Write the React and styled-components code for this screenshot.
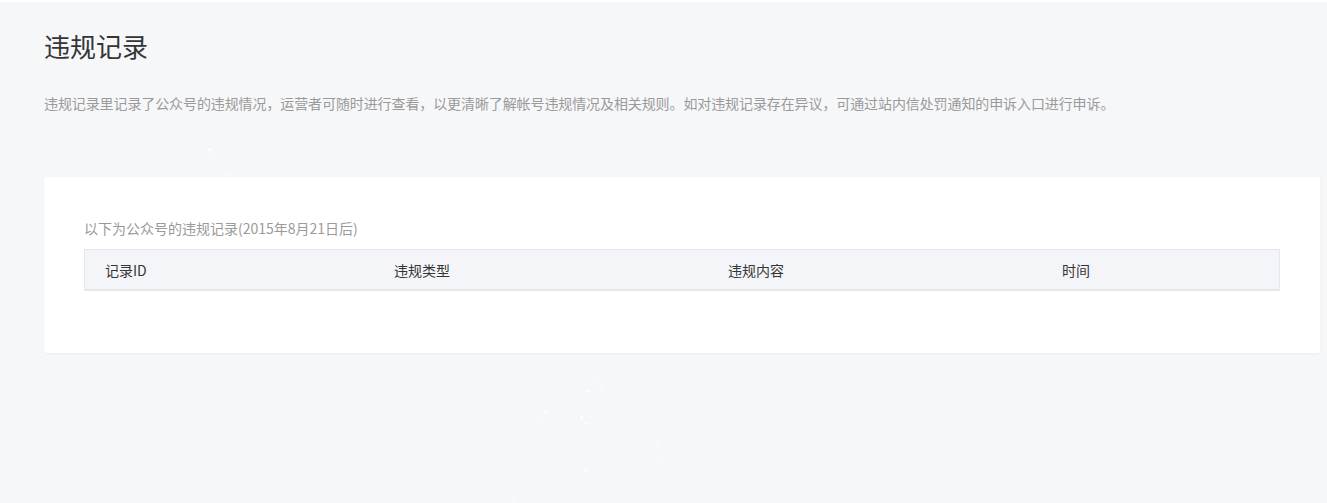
import React from "react";
import styled, { createGlobalStyle } from "styled-components";

const Global = createGlobalStyle`
  html, body { margin: 0; padding: 0; background: #f6f7f9; }
  body {
    font-family: "Noto Sans CJK SC", "Noto Sans", sans-serif;
    color: #353535;
  }
`;

const Page = styled.div`
  position: relative;
  min-height: 503px;
  box-sizing: border-box;
  border-top: 2px solid #ffffff;
  background: #f6f7f9;
  padding: 24px 7px 0 44px;
  overflow: hidden;
`;

const Title = styled.h1`
  margin: 0;
  font-size: 26px;
  font-weight: 400;
  line-height: 40px;
  color: #353535;
`;

const Desc = styled.p`
  margin: 26px 0 0;
  font-size: 14px;
  line-height: 22px;
  color: #9a9a9a;
  letter-spacing: -0.1px;
`;

const Card = styled.section`
  margin-top: 63px;
  background: #ffffff;
  border-radius: 3px;
  box-shadow: 0 1px 3px rgba(0, 0, 0, 0.05);
  padding: 39px 40px 62px;
`;

const Caption = styled.div`
  font-size: 14px;
  line-height: 24px;
  color: #9a9a9a;
  margin-bottom: 9px;
`;

const Table = styled.div`
  border: 1px solid #e4e6eb;
  border-bottom-width: 2px;
  background: #f4f5f9;
  display: grid;
  grid-template-columns: 289px 334px 334px 1fr;
  height: 39px;
  align-items: center;
`;

const HeadCell = styled.div`
  padding-left: 20px;
  font-size: 14px;
  color: #353535;
`;

const Dot = styled.span`
  position: absolute;
  width: ${(p) => p.s}px;
  height: ${(p) => p.s}px;
  border-radius: 50%;
  background: #ffffff;
  opacity: 0.9;
`;

const dots = [
  [208, 146, 3], [210, 150, 2], [225, 172, 2], [229, 170, 1],
  [583, 368, 2], [596, 378, 2], [600, 384, 2], [587, 387, 3],
  [586, 389, 2], [544, 409, 3], [546, 408, 2], [541, 416, 2],
  [541, 429, 2], [580, 414, 3], [585, 420, 3], [583, 434, 2],
  [656, 443, 2], [657, 457, 2], [584, 467, 3], [512, 496, 2]
];

export default function App() {
  return (
    <>
      <Global />
      <Page>
        <Title>违规记录</Title>
        <Desc>
          违规记录里记录了公众号的违规情况，运营者可随时进行查看，以更清晰了解帐号违规情况及相关规则。如对违规记录存在异议，可通过站内信处罚通知的申诉入口进行申诉。
        </Desc>
        <Card>
          <Caption>以下为公众号的违规记录(2015年8月21日后)</Caption>
          <Table>
            <HeadCell>记录ID</HeadCell>
            <HeadCell>违规类型</HeadCell>
            <HeadCell>违规内容</HeadCell>
            <HeadCell>时间</HeadCell>
          </Table>
        </Card>
        {dots.map(([x, y, s], i) => (
          <Dot key={i} s={s} style={{ left: x, top: y }} />
        ))}
      </Page>
    </>
  );
}
